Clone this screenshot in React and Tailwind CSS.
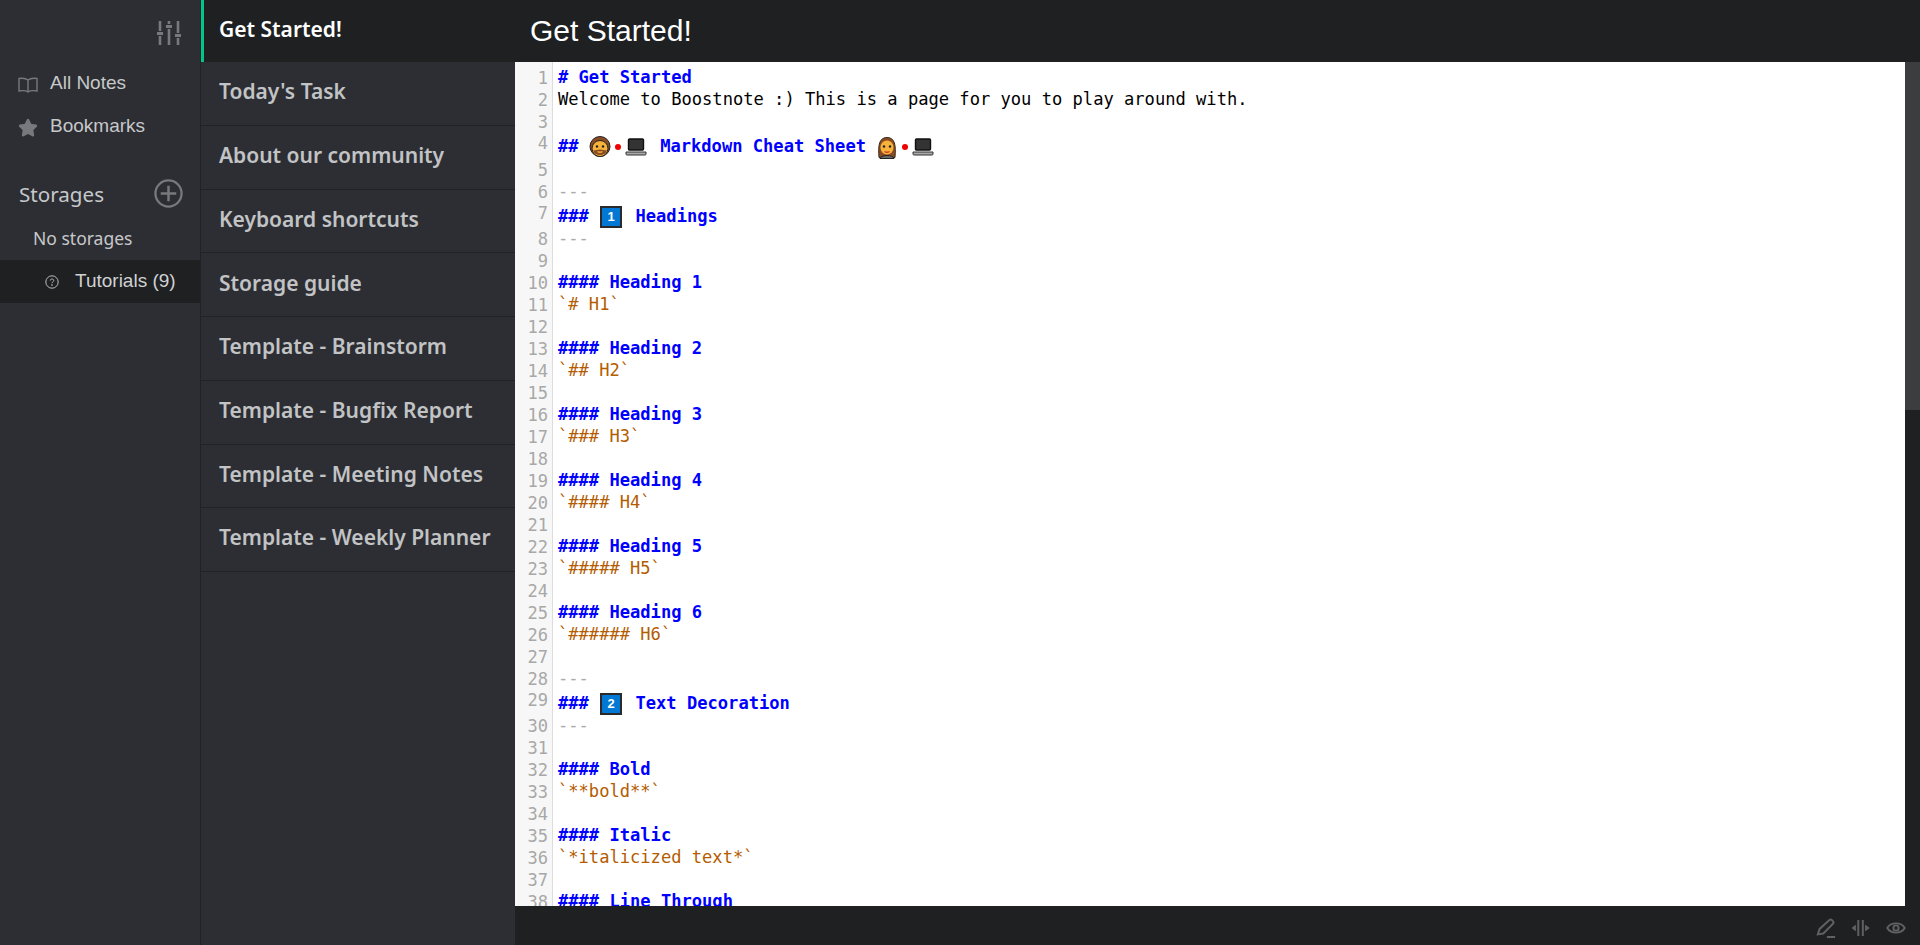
import { Star } from 'lucide-react';

const notes = [
  'Get Started!',
  "Today's Task",
  'About our community',
  'Keyboard shortcuts',
  'Storage guide',
  'Template - Brainstorm',
  'Template - Bugfix Report',
  'Template - Meeting Notes',
  'Template - Weekly Planner',
];

function Face({ woman }) {
  return (
    <svg viewBox="0 0 22 24" className="w-[22px] h-[25px] shrink-0">
      {woman && <path d="M3 22 C2 10 3 2 11 2 C19 2 20 10 19 22 Z" fill="#8a4b22" stroke="#3a2a1a" strokeWidth="1" />}
      {woman && <path d="M4 23 C5 19 17 19 18 23 Z" fill="#6b6b6b" stroke="#222" strokeWidth="1" />}
      {!woman && <circle cx="11" cy="11" r="10" fill="#8a4b22" stroke="#222" strokeWidth="1" />}
      <ellipse cx="11" cy={woman ? 12 : 13} rx={woman ? 6.5 : 8} ry={woman ? 7 : 8} fill="#f7b23b" stroke={woman ? 'none' : '#222'} strokeWidth="1" />
      {!woman && <path d="M4 15 C6 21 16 21 18 15 C15 15 13 14 11 14 C9 14 7 15 4 15 Z" fill="#8a4b22" />}
      <circle cx="8" cy="11" r="1.2" fill="#222" />
      <circle cx="14" cy="11" r="1.2" fill="#222" />
      <path d="M8.5 16 Q11 17.5 13.5 16" fill="none" stroke={woman ? '#c9392b' : '#f7b23b'} strokeWidth="1.4" />
    </svg>
  );
}

function Laptop() {
  return (
    <svg viewBox="0 0 22 18" className="w-[22px] h-[18px] shrink-0">
      <rect x="3.5" y="1" width="15" height="11" rx="1" fill="#333" stroke="#111" strokeWidth="1.4" />
      <path d="M1 14 L21 14 L21 16 Q21 17 20 17 L2 17 Q1 17 1 16 Z" fill="#aaa" stroke="#333" strokeWidth="1" />
    </svg>
  );
}

function Dot() {
  return <span className="inline-block w-[6px] h-[6px] rounded-full bg-[#f00000] ml-[4px] mr-[4px] shrink-0" />;
}

function Keycap({ n }) {
  return (
    <span className="inline-flex items-center justify-center w-[22px] h-[22px] bg-[#0078d4] border-2 border-[#2a2a2a] text-white text-[13px] font-bold ml-[1px] mr-[3px] shrink-0 font-['Liberation_Sans',sans-serif]">
      {n}
    </span>
  );
}

const H = 'text-[#0000ff] font-bold';
const Q = 'text-[#b35c00]';
const R = 'text-[#aaaaaa]';
const T = 'text-black';

const lines = [
  { c: H, t: '# Get Started' },
  { c: T, t: 'Welcome to Boostnote :) This is a page for you to play around with.' },
  {},
  {
    h: 'h-[26px]',
    c: H,
    n: (
      <>
        <span>##&nbsp;</span>
        <Face />
        <Dot />
        <Laptop />
        <span className="ml-[3px]">&nbsp;Markdown Cheat Sheet&nbsp;</span>
        <Face woman />
        <Dot />
        <Laptop />
      </>
    ),
  },
  {},
  { c: R, t: '---' },
  {
    h: 'h-[25px]',
    c: H,
    n: (
      <>
        <span>###&nbsp;</span>
        <Keycap n="1" />
        <span>&nbsp;Headings</span>
      </>
    ),
  },
  { c: R, t: '---' },
  {},
  { c: H, t: '#### Heading 1' },
  { c: Q, t: '`# H1`' },
  {},
  { c: H, t: '#### Heading 2' },
  { c: Q, t: '`## H2`' },
  {},
  { c: H, t: '#### Heading 3' },
  { c: Q, t: '`### H3`' },
  {},
  { c: H, t: '#### Heading 4' },
  { c: Q, t: '`#### H4`' },
  {},
  { c: H, t: '#### Heading 5' },
  { c: Q, t: '`##### H5`' },
  {},
  { c: H, t: '#### Heading 6' },
  { c: Q, t: '`###### H6`' },
  {},
  { c: R, t: '---' },
  {
    h: 'h-[25px]',
    c: H,
    n: (
      <>
        <span>###&nbsp;</span>
        <Keycap n="2" />
        <span>&nbsp;Text Decoration</span>
      </>
    ),
  },
  { c: R, t: '---' },
  {},
  { c: H, t: '#### Bold' },
  { c: Q, t: '`**bold**`' },
  {},
  { c: H, t: '#### Italic' },
  { c: Q, t: '`*italicized text*`' },
  {},
  { c: H, t: '#### Line Through' },
];

export default function App() {
  return (
    <div className="flex h-[945px] w-[1920px] overflow-hidden bg-[#2c2e33] font-['Liberation_Sans',sans-serif]">
      {/* left nav */}
      <aside className="w-[201px] shrink-0 border-r border-[#202226] flex flex-col">
        <div className="h-[62px] flex justify-end items-start pt-[20px] pr-[19px]">
          <svg viewBox="0 0 24 25" className="w-[24px] h-[25px]" fill="none" stroke="#77797c" strokeWidth="2.6">
            <path d="M3 1V11M3 16V25M12 1V4M12 9V25M21 1V13M21 18V25" />
            <path d="M0 13.5H6M9 6.5H15M18 15.5H24" strokeWidth="3" />
          </svg>
        </div>
        <div className="flex flex-col">
          <div className="h-[43px] flex items-center pl-[18px] text-[19px] text-[#c7c8ca]">
            <svg viewBox="0 0 20 16" className="w-[20px] h-[16px] mr-[12px] mt-[2px]" fill="none" stroke="#77797c" strokeWidth="1.4">
              <path d="M10 3C8 1.5 4 1 1 1.5V14C4 13.5 8 13.5 10 15C12 13.5 16 13.5 19 14V1.5C16 1 12 1.5 10 3ZM10 3V15" />
            </svg>
            All Notes
          </div>
          <div className="h-[43px] flex items-center pl-[18px] text-[19px] text-[#c7c8ca]">
            <Star className="w-[20px] h-[20px] mr-[12px] mt-[2px] text-[#77797c]" fill="#77797c" />
            Bookmarks
          </div>
        </div>
        <div className="mt-[26px] h-[40px] flex items-center justify-between pl-[19px] pr-[17px] text-[20.6px] text-[#c7c8ca] font-['Noto_Sans',sans-serif]">
          Storages
          <svg viewBox="0 0 28 28" className="w-[29px] h-[29px] -mt-[2px]" fill="none" stroke="#77797c" strokeWidth="2.2">
            <circle cx="14" cy="14" r="12.6" />
            <path d="M14 6.5V21.5M6.5 14H21.5" strokeWidth="2.4" />
          </svg>
        </div>
        <div className="h-[46px] flex items-center pl-[33px] pt-[2px] text-[17.5px] text-[#c7c8ca] font-['Noto_Sans',sans-serif]">No storages</div>
        <div className="h-[43px] flex items-center pl-[45px] bg-[#1e2022] text-[19px] text-[#d0d1d3]">
          <svg viewBox="0 0 14 14" className="w-[14px] h-[14px] mr-[16px]" fill="none" stroke="#bbbcbe" strokeWidth="1">
            <circle cx="7" cy="7" r="6.2" />
            <path d="M5.3 5.5C5.3 3.5 8.8 3.5 8.8 5.5C8.8 6.8 7 6.8 7 8.2" />
            <circle cx="7" cy="10" r="0.4" />
          </svg>
          Tutorials (9)
        </div>
      </aside>

      {/* note list */}
      <section className="w-[314px] shrink-0 flex flex-col font-['Noto_Sans',sans-serif]">
        {notes.map((note, i) =>
          i === 0 ? (
            <div key={note} className="h-[62.4px] shrink-0 flex items-center pl-[15px] pb-[2px] bg-[#1e2022] border-l-[3px] border-[#02c58b] text-[21px] font-semibold text-white">
              {note}
            </div>
          ) : (
            <div key={note} className="h-[63.7px] shrink-0 flex items-center pl-[18px] pb-[3px] border-b border-[#202226] text-[21px] font-semibold text-[#c2c3c5]">
              {note}
            </div>
          ),
        )}
      </section>

      {/* editor */}
      <main className="flex-1 flex flex-col min-w-0">
        <header className="h-[62px] shrink-0 bg-[#1e2022] flex items-center pl-[15px] pb-[2px] text-[30px] text-white">Get Started!</header>
        <div className="flex-1 min-h-0 flex bg-white overflow-hidden">
          <div className="flex-1 min-w-0 overflow-hidden font-['DejaVu_Sans_Mono',monospace] text-[17.1px]">
            <div className="flex flex-col">
              <div className="w-[38px] h-[5px] shrink-0 bg-[#f7f7f7] border-r border-[#dddddd]" />
              {lines.map((l, i) => (
                <div key={i} className={`flex ${l.h || 'h-[22px]'} shrink-0`}>
                  <div className={`w-[38px] shrink-0 bg-[#f7f7f7] border-r border-[#dddddd] text-right pr-[4px] text-[#a8a8a8] ${l.h ? 'leading-[20px]' : 'leading-[22px]'}`}>{i + 1}</div>
                  <div className={`pl-[5px] flex items-center whitespace-pre ${l.h ? 'pt-[2px]' : ''} ${l.c || ''}`}>{l.n || l.t}</div>
                </div>
              ))}
            </div>
          </div>
          <div className="w-[15px] shrink-0 bg-[#1e2022]">
            <div className="h-[348px] bg-[#3c3d3f]" />
          </div>
        </div>
        <footer className="h-[39px] shrink-0 bg-[#1e2022] flex items-center justify-end gap-[15px] pr-[14px] pt-[5px]">
          <svg viewBox="0 0 22 22" className="w-[20px] h-[20px]" fill="none" stroke="#5f6164" strokeWidth="2.2">
            <path d="M2 18L4 12L15 2C17 1 20 4 19 6L8 17L2 18ZM12 21H21" />
          </svg>
          <svg viewBox="0 0 22 20" className="w-[20px] h-[18px]" fill="#5f6164" stroke="#5f6164" strokeWidth="2.2">
            <path d="M8 1V19M13 1V19" fill="none" />
            <path d="M1 10L5 7V13ZM20 10L16 7V13Z" strokeWidth="1" />
          </svg>
          <svg viewBox="0 0 22 16" className="w-[20px] h-[14px]" fill="none" stroke="#5f6164" strokeWidth="2.2">
            <path d="M1 8C5 1 17 1 21 8C17 15 5 15 1 8Z" />
            <circle cx="11" cy="8" r="3" />
          </svg>
        </footer>
      </main>
    </div>
  );
}
